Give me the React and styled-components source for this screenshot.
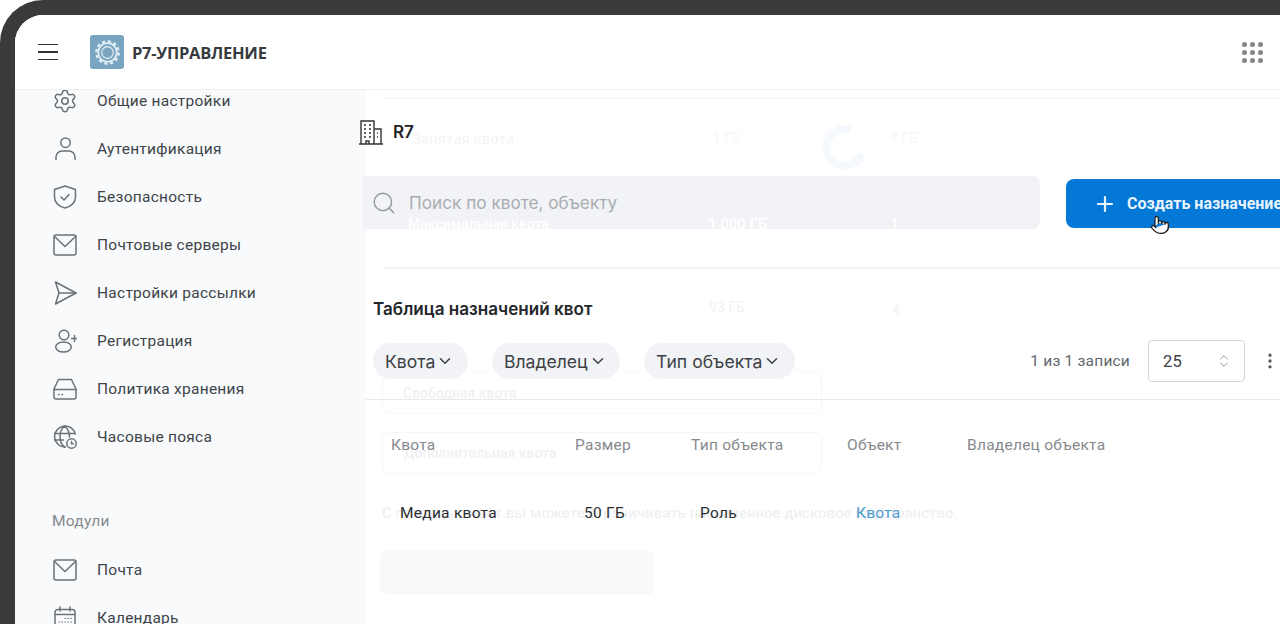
import React from "react";
import styled, { createGlobalStyle } from "styled-components";
import { ChevronDown, ChevronsUpDown, EllipsisVertical, Plus, Search, Settings, Pointer } from "lucide-react";

const Global = createGlobalStyle`
  html, body { margin: 0; height: 100%; background: #fff; overflow: hidden; }
  body { font-family: Roboto, "Liberation Sans", sans-serif; }
`;

const Frame = styled.div`
  box-sizing: border-box;
  width: 1280px;
  height: 624px;
  border-top: 15px solid #3a3a3a;
  border-left: 15px solid #3a3a3a;
  border-top-left-radius: 43px;
  overflow: hidden;
  display: flex;
  flex-direction: column;
  background: #fff;
`;
const Header = styled.header`
  box-sizing: border-box;
  height: 75px;
  flex: none;
  display: flex;
  align-items: center;
  padding: 0 17.500px 0 23px;
  border-bottom: 1px solid #eef0f2;
  background: #fff;
`;
const Burger = styled.div`
  width: 20px;
  height: 16.500px;
  display: flex;
  flex-direction: column;
  justify-content: space-between;
  margin-right: 32px;
  span { height: 1.500px; background: #333; display: block; }
`;
const Brand = styled.div`
  display: flex;
  align-items: center;
  gap: 8px;
  flex: 1;
  font: 700 16.500px "Open Sans", sans-serif;
  letter-spacing: -0.270px;
  color: #383b3e;
`;
const Logo = styled.div`
  width: 34px;
  height: 34px;
  border-radius: 3px;
  background: #7aa5c1;
  display: grid;
  place-items: center;
`;
const Apps = styled.div`
  display: grid;
  grid-template-columns: repeat(3, 5px);
  gap: 3px;
  i { width: 5px; height: 5px; border-radius: 50%; background: #85898e; display: block; }
`;
const Body = styled.div`
  flex: 1;
  min-height: 0;
  display: flex;
`;
const Sidebar = styled.nav`
  width: 351px;
  flex: none;
  background: #f8fafc;
  overflow: hidden;
  padding-left: 38px;
  box-sizing: border-box;
`;
const SideList = styled.div`
  margin-top: -13.500px;
`;
const SideItem = styled.div`
  height: 48px;
  display: flex;
  align-items: center;
  gap: 20px;
  font-size: 15.500px;
  letter-spacing: 0.260px;
  color: #404448;
  svg { flex: none; width: 24px; height: 24px; color: #6c7176; }
`;
const SideLabel = styled.div`
  margin-top: 36.500px;
  height: 48.500px;
  display: flex;
  align-items: center;
  font-size: 15.500px;
  letter-spacing: 0.260px;
  color: #85898e;
  margin-left: -1px;
`;
const Main = styled.main`
  position: relative;
  flex: 1;
  min-width: 0;
  background: #fff;
  display: flex;
  flex-direction: column;
`;
const Content = styled.div`
  position: relative;
  z-index: 1;
  display: flex;
  flex-direction: column;
`;
const OrgRow = styled.div`
  margin: 28px 0 0 -8px;
  height: 28px;
  display: flex;
  align-items: center;
  gap: 9px;
  font: 600 17px Inter, sans-serif;
  color: #222;
`;
const SearchRow = styled.div`
  margin: 30px 0 0 -3px;
  display: flex;
  align-items: flex-start;
  gap: 26px;
  width: 917px;
`;
const SearchBox = styled.div`
  width: 677px;
  height: 53px;
  flex: none;
  box-sizing: border-box;
  display: flex;
  align-items: center;
  gap: 12px;
  padding-left: 8px;
  background: #f1f3f6;
  border-radius: 0 8px 8px 0;
  font: 400 17.200px Inter, sans-serif;
  color: #a9adb2;
  svg { color: #93979c; }
`;
const CreateButton = styled.div`
  position: relative;
  margin-top: 3px;
  width: 240px;
  height: 49px;
  flex: none;
  box-sizing: border-box;
  display: flex;
  align-items: center;
  gap: 10px;
  padding-left: 27px;
  background: #0478d7;
  border-radius: 8px 0 0 8px;
  font: 700 16px Roboto, sans-serif;
  color: #eaf4fc;
  white-space: nowrap;
`;
const Hand = styled.span`
  position: absolute;
  left: 84px;
  top: 36px;
  width: 20px;
  height: 24px;
  color: #222;
  svg { fill: #fff; }
`;
const Title = styled.h2`
  margin: 68px 0 0 7px;
  height: 24px;
  font: 600 17.100px/24px Inter, sans-serif;
  color: #24272a;
`;
const FilterRow = styled.div`
  margin-top: 19px;
  height: 42px;
  padding: 0 0 17px 7px;
  border-bottom: 1px solid #e6e8ea;
  display: flex;
  align-items: center;
`;
const Chip = styled.div`
  height: 36px;
  box-sizing: border-box;
  display: flex;
  align-items: center;
  gap: 1px;
  padding: 0 13.500px 0 12px;
  margin-right: 24px;
  background: #f1f3f6;
  border-radius: 18px;
  font: 400 17.600px Inter, sans-serif;
  color: #3d4145;
  svg { color: #3d4145; }
`;
const Pager = styled.div`
  margin-left: auto;
  display: flex;
  align-items: center;
  font-size: 15.500px;
  letter-spacing: 0.200px;
  color: #63676b;
`;
const Select = styled.div`
  box-sizing: border-box;
  width: 97px;
  height: 42px;
  margin: 0 15px 0 18px;
  padding: 0 12px 0 14px;
  display: flex;
  align-items: center;
  justify-content: space-between;
  border: 1px solid #d3d6d9;
  border-radius: 4px;
  font-size: 16.500px;
  color: #3d4145;
  svg { color: #84888d; }
`;
const GridRow = styled.div`
  margin-top: ${(p) => p.$top}px;
  height: 30px;
  padding-left: ${(p) => p.$inset}px;
  display: grid;
  grid-template-columns: 184px 116px 156px 120px auto;
  align-items: center;
  font-size: 15.500px;
  letter-spacing: 0.260px;
  color: ${(p) => p.$color};
`;
const LinkCell = styled.span`
  color: #4a9bd0;
`;
const Ghost = styled.div`
  position: absolute;
  left: ${(p) => p.$x}px;
  top: ${(p) => p.$y}px;
  width: ${(p) => p.$w}px;
  height: ${(p) => p.$h}px;
  box-sizing: border-box;
  background: ${(p) => p.$bg || "transparent"};
  border: ${(p) => (p.$line ? `1.500px solid ${p.$line}` : "none")};
  border-radius: ${(p) => p.$r || 0}px;
`;
const GhostRing = styled.div`
  position: absolute;
  left: 456px;
  top: 35px;
  width: 45px;
  height: 45px;
  box-sizing: border-box;
  border-radius: 50%;
  border: 8px solid #f5f9fd;
  border-right-color: transparent;
  transform: rotate(-25deg);
`;
const GhostText = styled.div`
  position: absolute;
  left: ${(p) => p.$x}px;
  top: ${(p) => p.$y}px;
  z-index: ${(p) => p.$z || 0};
  font: 500 ${(p) => p.$size || 14}px Roboto, sans-serif;
  color: ${(p) => p.$color || "#eff0f2"};
  white-space: nowrap;
  filter: blur(0.600px);
`;

const I = ({ children }) => (
  <svg viewBox="0 0 24 24" fill="none" stroke="currentColor" strokeWidth="1.500" strokeLinecap="round" strokeLinejoin="round">
    {children}
  </svg>
);
const MailIcon = () => (
  <I>
    <rect x="1" y="2" width="22" height="20" rx="2" />
    <path d="M1.500 3.500 12 13.500 22.500 3.500" />
  </I>
);
const items = [
  ["Аутентификация", <I><circle cx="12.500" cy="5.700" r="4.700" /><path d="M3 22.500v-2.500a6 6 0 0 1 6-6h7a6 6 0 0 1 6 6v2.500" /></I>],
  ["Безопасность", <I><path d="M12 1 22.500 4.500V12c0 5.800-4.600 9.400-10.500 11C6.100 21.400 1.500 17.800 1.500 12V4.500Z" /><path d="M8 12l3 3 5-5.500" /></I>],
  ["Почтовые серверы", <MailIcon />],
  ["Настройки рассылки", <I><path d="M2.500 1 23 12 2.500 23 6 12Z" /><path d="M6 12H23" /></I>],
  ["Регистрация", <I><circle cx="11" cy="6" r="4.800" /><ellipse cx="10.500" cy="18" rx="7.800" ry="5" /><path d="M21.500 6.500v6M18.500 9.500h6" /></I>],
  ["Политика хранения", <I><path d="M5.500 2.500h13L23 12v8a2 2 0 0 1-2 2H3a2 2 0 0 1-2-2v-8Z" /><path d="M1 12.500h22M5.500 17.500h.5M9 17.500h.5" /></I>],
  ["Часовые пояса", <I><path d="M12.500 22A10.500 10.500 0 1 1 22.300 9" /><path d="M1.500 8.500h20M1.500 15h9M11.500 1c-6 5-6 16 0 21M11.500 1c3.500 3 5 7 5 11" /><circle cx="18.500" cy="18.500" r="4.700" /><path d="M18.500 16.500v2.200h1.800" /></I>],
];

export default function App() {
  return (
    <>
      <Global />
      <Frame>
        <Header>
          <Burger><span /><span /><span /></Burger>
          <Brand>
            <Logo>
              <svg width="27" height="27" viewBox="0 0 27 27" fill="none" stroke="#e4eff5">
                <circle cx="13.500" cy="13.500" r="11.200" strokeWidth="2.200" strokeDasharray="3.200 2.660" />
                <circle cx="13.500" cy="13.500" r="9.300" strokeWidth="1.800" />
                <circle cx="13.500" cy="13.500" r="5.800" strokeWidth="1.200" />
              </svg>
            </Logo>
            Р7-УПРАВЛЕНИЕ
          </Brand>
          <Apps>{Array.from({ length: 9 }, (_, i) => <i key={i} />)}</Apps>
        </Header>
        <Body>
          <Sidebar>
            <SideList>
              <SideItem><Settings strokeWidth={1.400} style={{ transform: "scale(1.080)" }} />Общие настройки</SideItem>
              {items.map(([t, ic]) => <SideItem key={t}>{ic}{t}</SideItem>)}
              <SideLabel>Модули</SideLabel>
              <SideItem><MailIcon />Почта</SideItem>
              <SideItem>
                <I>
                  <rect x="2" y="3.500" width="20" height="20" rx="3" />
                  <path d="M2 8.500h20M7 1v4M17 1v4" />
                  <path d="M12 12.500h.5M15 12.500h.5M18 12.500h.5M6 16h.5M9 16h.5M12 16h.5M15 16h.5M18 16h.5M6 19.500h.5M9 19.500h.5M12 19.500h.5M15 19.500h.5" strokeWidth="1.200" />
                </I>
                Календарь
              </SideItem>
            </SideList>
          </Sidebar>
          <Main>
            <Ghost $x={18} $y={7} $w={896} $h={1.500} $bg="#f5f6f7" />
            <GhostRing />
            <GhostText $x={46} $y={40} $size={15} $color="#f4f5f6">Занятая квота</GhostText>
            <GhostText $x={347} $y={40} $color="#f6f7f8">1 ГБ</GhostText>
            <GhostText $x={524} $y={40} $color="#f6f7f8">4 ГБ</GhostText>
            <Ghost $x={18} $y={177} $w={896} $h={1.500} $bg="#f1f2f3" />
            <GhostText $x={343} $y={209} $color="#f2f3f4">93 ГБ</GhostText>
            <GhostText $x={526} $y={212} $color="#f2f3f4">4</GhostText>
            <Ghost $x={16} $y={281} $w={440} $h={43} $line="#f6f7f8" $r={8} />
            <GhostText $x={37} $y={295}>Свободная квота</GhostText>
            <Ghost $x={16} $y={342} $w={440} $h={42} $line="#f6f7f8" $r={8} />
            <GhostText $x={38} $y={355}>Дополнительная квота</GhostText>
            <GhostText $x={16} $y={414} $size={15}>С помощью квот вы можете ограничивать назначенное дисковое пространство.</GhostText>
            <Ghost $x={14} $y={460} $w={274} $h={45} $bg="#f8f9fb" $r={8} />
            <GhostText $x={42} $y={126} $z={2} $color="#fff">Максимальная квота</GhostText>
            <GhostText $x={342} $y={125} $z={2} $size={15} $color="#fff">1 000 ГБ</GhostText>
            <GhostText $x={525} $y={126} $z={2} $color="#fff">1</GhostText>
            <Content>
              <OrgRow>
                <svg width="26" height="26" viewBox="0 0 26 26" fill="none" stroke="#333" strokeWidth="1.400">
                  <path d="M1 25h24M3 25V2h13v23M16 10h7v15" />
                  <path d="M6 6h2M11 6h2M6 10h2M11 10h2M6 14h2M11 14h2M6 18h2M11 18h2M19 14h1M19 18h1M8 25v-3h3v3" />
                </svg>
                R7
              </OrgRow>
              <SearchRow>
                <SearchBox><Search size={26} strokeWidth={1.300} />Поиск по квоте, объекту</SearchBox>
                <CreateButton>
                  <Plus size={24} strokeWidth={2.200} />Создать назначение
                  <Hand><Pointer size={20} strokeWidth={1.600} /></Hand>
                </CreateButton>
              </SearchRow>
              <Title>Таблица назначений квот</Title>
              <FilterRow>
                <Chip>Квота<ChevronDown size={18} /></Chip>
                <Chip>Владелец<ChevronDown size={18} /></Chip>
                <Chip>Тип объекта<ChevronDown size={18} /></Chip>
                <Pager>
                  1 из 1 записи
                  <Select>25<ChevronsUpDown size={16} strokeWidth={1.300} /></Select>
                  <EllipsisVertical size={20} color="#55595d" />
                </Pager>
              </FilterRow>
              <GridRow $top={29.500} $inset={25} $color="#85898e">
                <span>Квота</span><span>Размер</span><span>Тип объекта</span><span>Объект</span><span>Владелец объекта</span>
              </GridRow>
              <GridRow $top={38.500} $inset={34} $color="#2c2f32">
                <span>Медиа квота</span><span>50 ГБ</span><span>Роль</span><LinkCell>Квота</LinkCell>
              </GridRow>
            </Content>
          </Main>
        </Body>
      </Frame>
    </>
  );
}
